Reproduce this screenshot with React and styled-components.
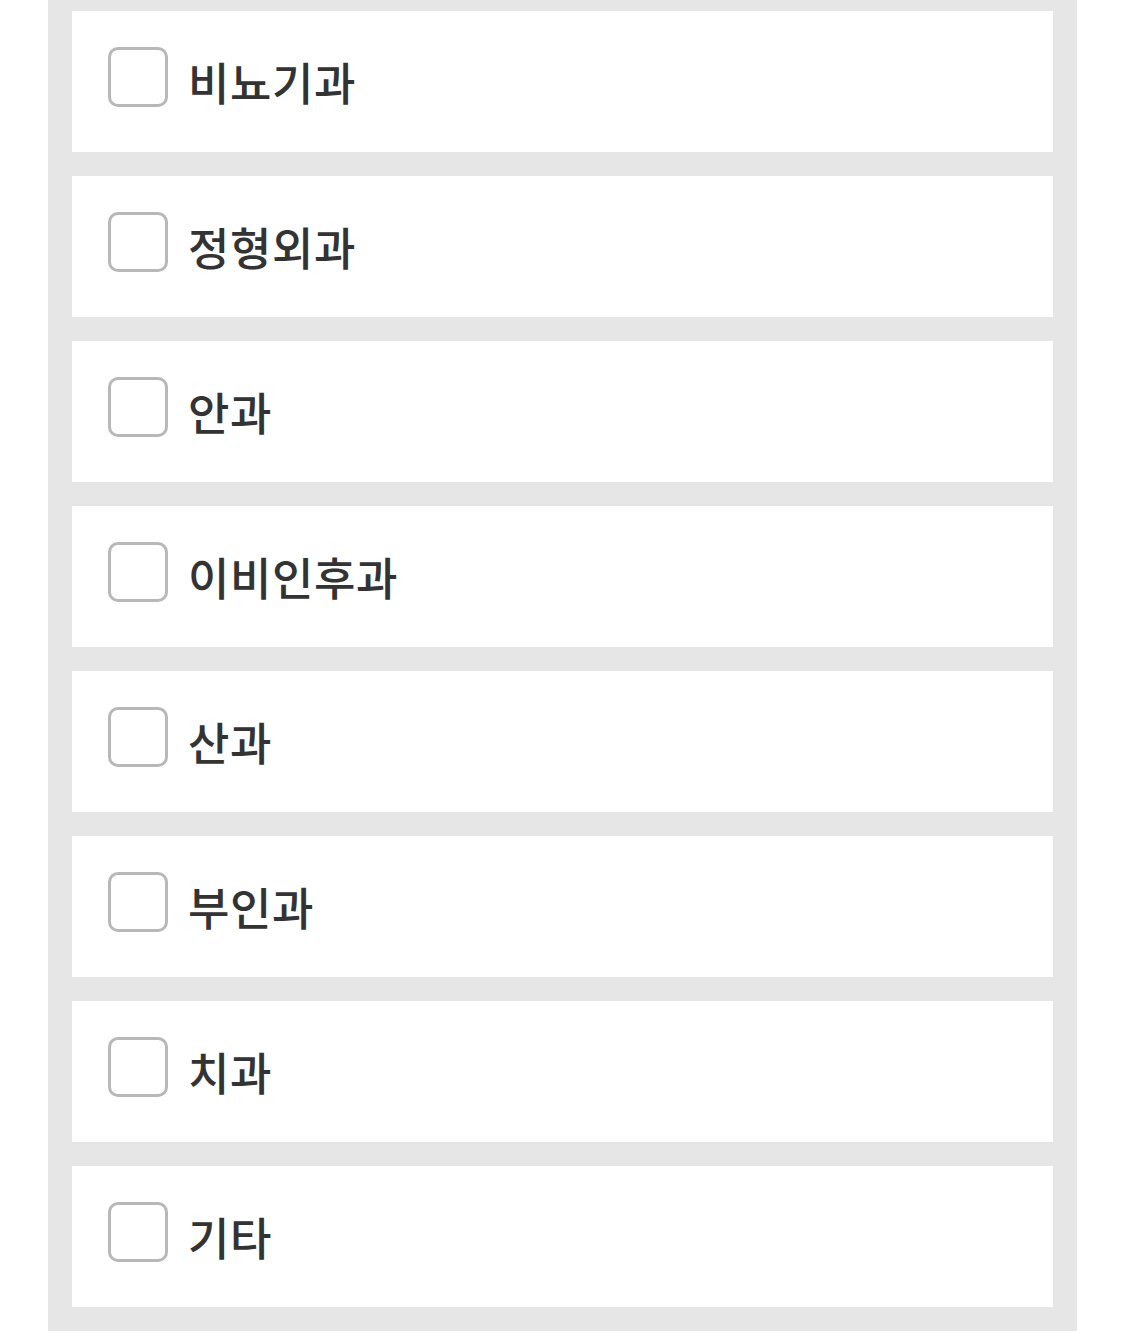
import React from "react";
import styled, { createGlobalStyle } from "styled-components";

const Global = createGlobalStyle`
  html, body { margin: 0; padding: 0; background: #ffffff; }
  body { font-family: "Noto Sans CJK KR", "Noto Sans", sans-serif; }
`;

const Panel = styled.div`
  width: 1029px;
  margin-left: 48px;
  box-sizing: border-box;
  background: #e6e6e6;
  padding: 11px 24px 24px;
  display: flex;
  flex-direction: column;
  gap: 24px;
`;

const Option = styled.label`
  height: 141px;
  box-sizing: border-box;
  background: #ffffff;
  display: flex;
  align-items: flex-start;
  padding: 36px 36px 0;
  gap: 20px;
  cursor: pointer;
`;

const Box = styled.span`
  flex: none;
  width: 60px;
  height: 60px;
  box-sizing: border-box;
  border: 3px solid #b8b8b8;
  border-radius: 10px;
  background: #fff;
`;

const Text = styled.span`
  font-family: "Noto Sans CJK KR", "Noto Sans", sans-serif;
  font-size: 45px;
  font-weight: 500;
  letter-spacing: 0.6px;
  color: #333333;
  line-height: 60px;
  margin-top: 5px;
`;

const items = ["비뇨기과", "정형외과", "안과", "이비인후과", "산과", "부인과", "치과", "기타"];

export default function App() {
  return (
    <>
      <Global />
      <Panel>
        {items.map((t) => (
          <Option key={t}>
            <Box />
            <Text>{t}</Text>
          </Option>
        ))}
      </Panel>
    </>
  );
}
